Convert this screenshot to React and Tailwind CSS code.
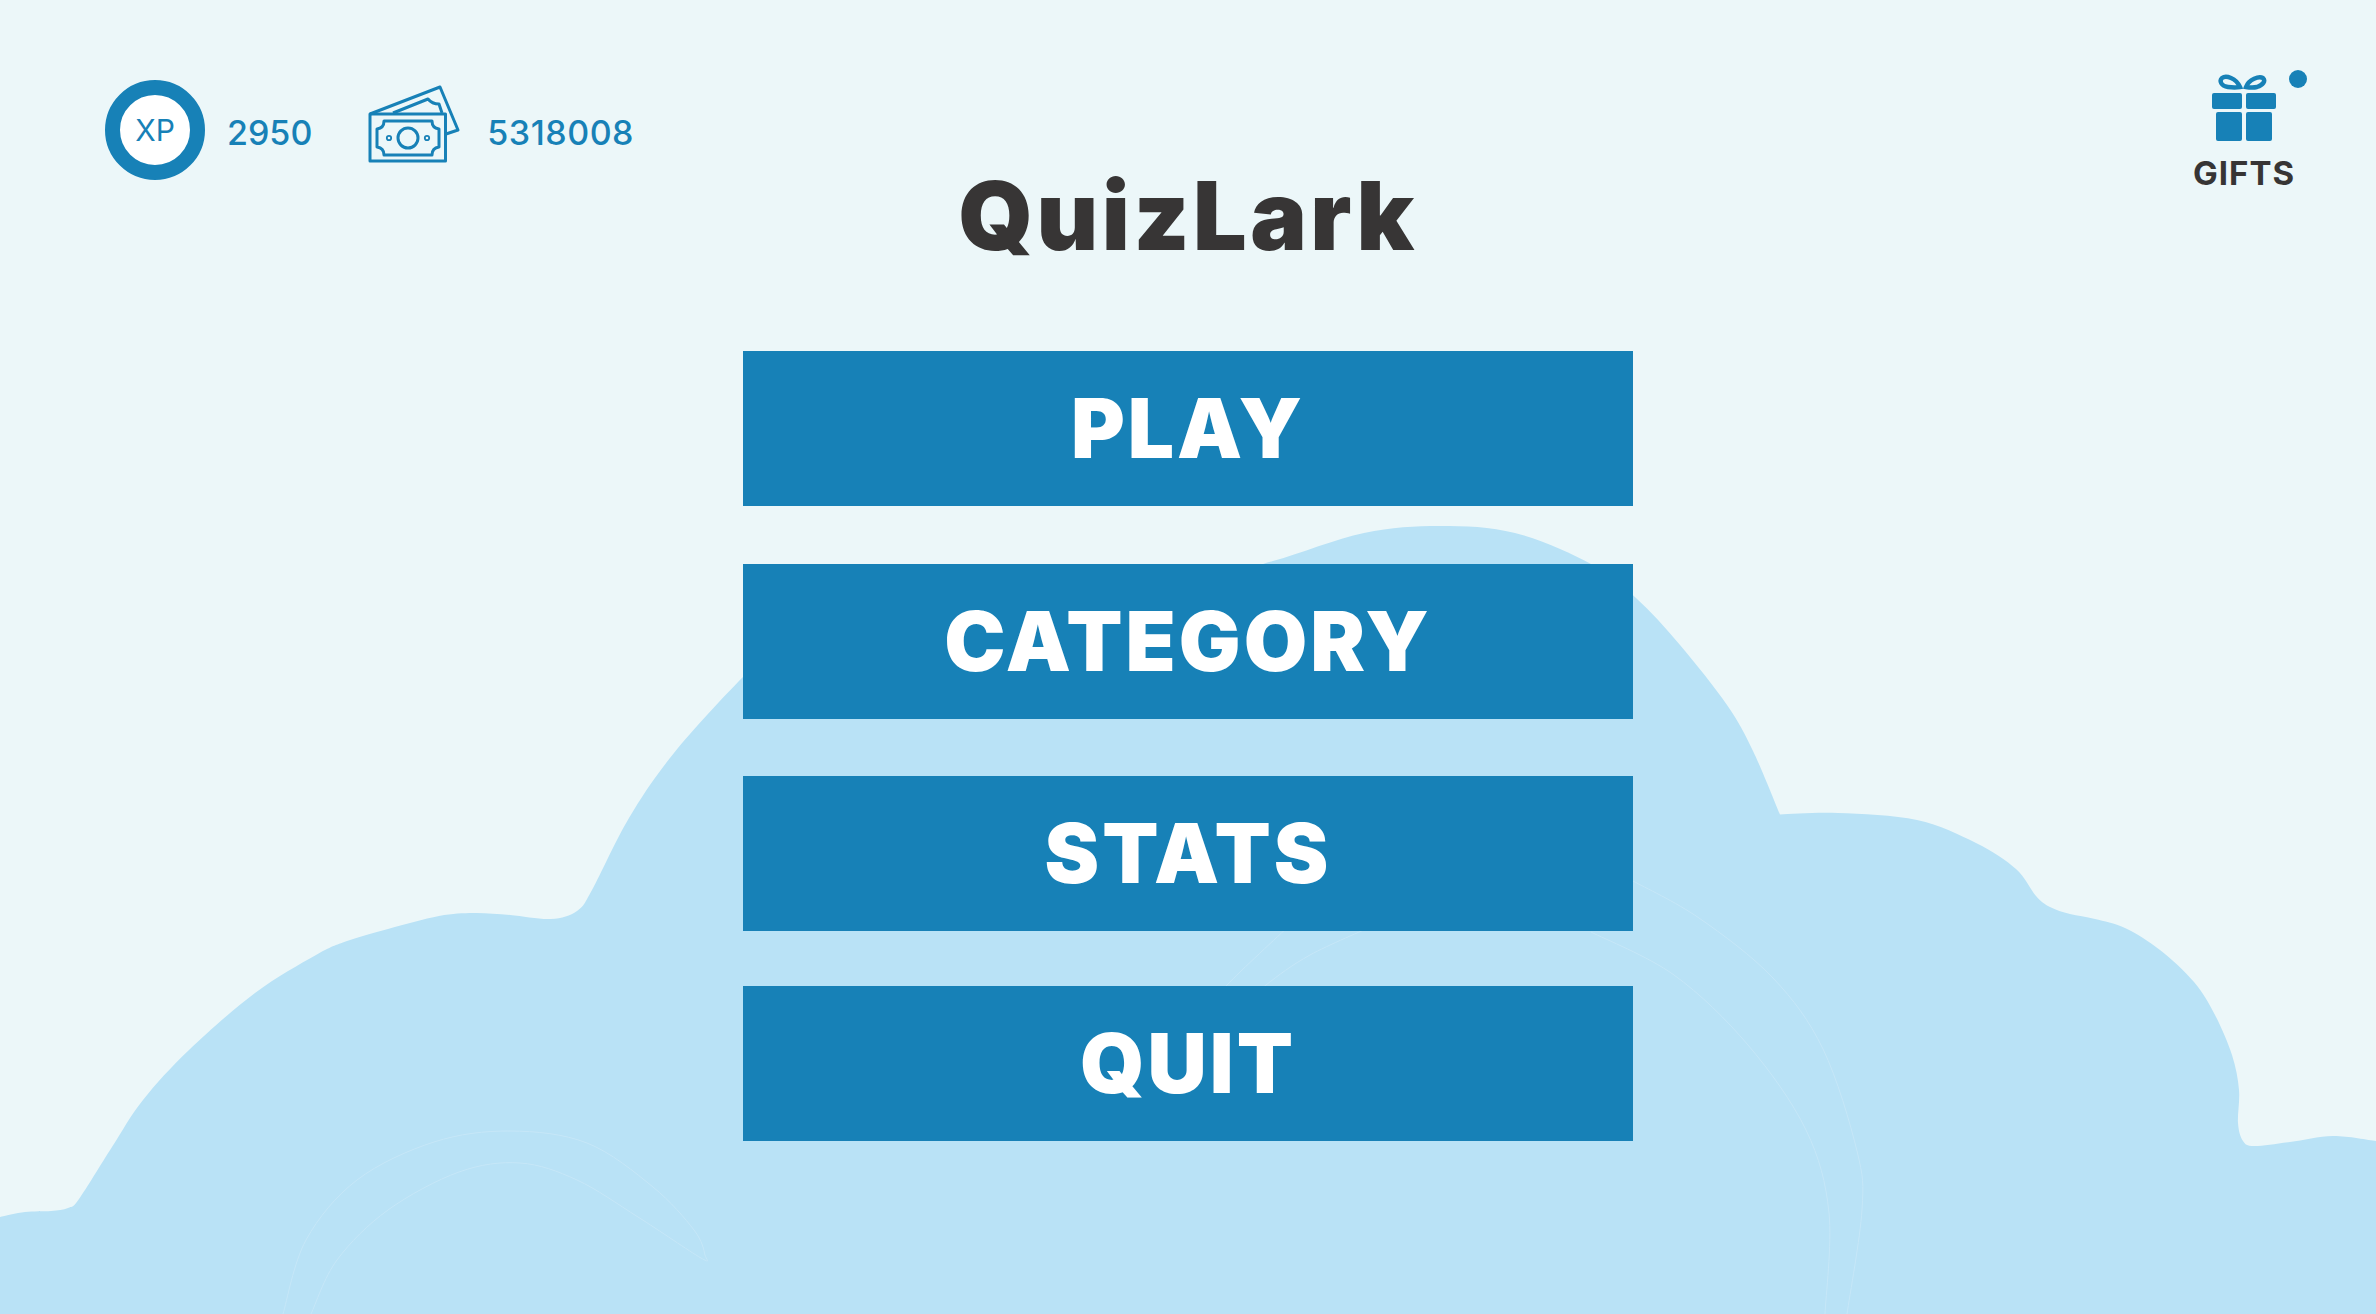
// smooth curve through a list of points
function curve(points) {
  let d = "";
  for (let i = 0; i < points.length - 1; i++) {
    const p0 = points[i - 1] || points[i];
    const p1 = points[i];
    const p2 = points[i + 1];
    const p3 = points[i + 2] || p2;
    const c1 = [p1[0] + (p2[0] - p0[0]) / 6, p1[1] + (p2[1] - p0[1]) / 6];
    const c2 = [p2[0] - (p3[0] - p1[0]) / 6, p2[1] - (p3[1] - p1[1]) / 6];
    d += ` C${c1[0]} ${c1[1]} ${c2[0]} ${c2[1]} ${p2[0]} ${p2[1]}`;
  }
  return d;
}

const blobLeft = [
  [0, 1217], [25, 1212], [51, 1211], [68, 1208], [79, 1199], [112, 1147], [143, 1100], [189, 1050],
  [255, 993], [316, 955], [347, 941], [388, 929], [439, 916], [474, 913], [510, 915], [551, 919], [577, 911], [592, 890],
  [629, 818], [674, 753], [743, 677], [800, 625], [870, 590], [1000, 578], [1200, 578], [1273, 561], [1364, 533], [1440, 526],
  [1515, 533], [1591, 564], [1636, 598], [1680, 645], [1727, 705], [1753, 751], [1780, 814.5],
];

const blobRight = [
  [1780, 814.5], [1838, 813], [1917, 820], [1976, 843], [2016, 869], [2036, 896], [2050, 907], [2070, 914],
  [2095, 919], [2125, 928], [2160, 950], [2194, 982], [2215, 1015], [2232, 1055], [2239, 1090], [2238, 1123],
  [2243, 1141], [2254, 1146], [2290, 1142], [2333, 1136], [2376, 1141],
];

const outlines = [
  [[283, 1314], [306, 1240], [357, 1180], [434, 1142], [510, 1131], [587, 1143], [653, 1187], [694, 1230], [705, 1255], [701, 1258], [638, 1217], [577, 1180], [520, 1163], [459, 1172], [388, 1210], [337, 1260], [311, 1314]],
  [[1633, 881], [1699, 918], [1773, 978], [1823, 1049], [1857, 1151], [1862, 1210], [1847, 1314]],
  [[1591, 932], [1674, 975], [1748, 1045], [1806, 1130], [1829, 1213], [1825, 1314]],
  [[1290, 925], [1227, 985], [1210, 1010]],
  [[1375, 925], [1310, 955], [1266, 985], [1240, 1010]],
];

function Background() {
  return (
    <svg width="2376" height="1314" viewBox="0 0 2376 1314" className="absolute inset-0">
      <path fill="#b9e2f6" d={`M0 1217${curve(blobLeft)}${curve(blobRight)} V1314 H0 Z`} />
      {outlines.map((line, i) => (
        <path key={i} fill="none" stroke="#c6e7f8" strokeWidth="1" d={`M${line[0][0]} ${line[0][1]}${curve(line)}`} />
      ))}
    </svg>
  );
}

function MoneyIcon() {
  return (
    <svg width="96" height="82" viewBox="0 0 96 82" className="block" fill="none" stroke="#1781b7" strokeWidth="3" strokeLinejoin="round">
      <rect x="4" y="31" width="75.5" height="47" />
      <path d="M4 31 L74 4 L92 47 L80 51" />
      <path d="M27 30 L62 16 Q66 21 73 21 L76 30" />
      <path d="M18 38 H66 Q66 45 73 46 V64 Q66 65 66 72 H18 Q18 65 11 64 V46 Q18 45 18 38 Z" />
      <circle cx="42" cy="55" r="10" />
      <circle cx="23" cy="55" r="2.2" strokeWidth="1.8" />
      <circle cx="61" cy="55" r="2.2" strokeWidth="1.8" />
    </svg>
  );
}

function GiftIcon() {
  return (
    <svg width="68" height="70" viewBox="0 0 68 70" className="block">
      <g fill="#1781b7">
        <rect x="2" y="21" width="30" height="16" rx="2" />
        <rect x="36" y="21" width="30" height="16" rx="2" />
        <rect x="6" y="40" width="26" height="29" rx="2" />
        <rect x="36" y="40" width="26" height="29" rx="2" />
      </g>
      <g fill="none" stroke="#1781b7" strokeWidth="4.4">
        <path d="M30 15 C26 6 16 3 12 6 C9 9 11 14 18 15 C22 15.5 27 15.5 30 15 Z" />
        <path d="M36 15 C39 7 49 4 53 6 C56 9 53 13 47 15 C43 16 39 15.5 36 15 Z" />
      </g>
    </svg>
  );
}

const menu = [
  { label: "PLAY", margin: "mt-[0px]" },
  { label: "CATEGORY", margin: "mt-[58px]" },
  { label: "STATS", margin: "mt-[57px]" },
  { label: "QUIT", margin: "mt-[55px]" },
];

export default function App() {
  return (
    <div className="relative h-[1314px] w-full overflow-hidden bg-[#ecf7f9] font-['Inter',sans-serif]">
      <Background />

      <div className="relative flex flex-col items-center">
        {/* Top bar */}
        <div className="flex h-[158px] w-full items-start justify-between pl-[105px] pr-[82px] pt-[72px]">
          <div className="mt-[8px] flex items-center">
            <div className="flex h-[100px] w-[100px] items-center justify-center rounded-full border-[15px] border-[#1781b7] bg-white">
              <span className="text-[30px] font-normal text-[#1781b7]">XP</span>
            </div>
            <span className="ml-[22px] mt-[6px] text-[34px] font-medium leading-none text-[#1781b7]">2950</span>
            <div className="mb-[12px] ml-[54px]">
              <MoneyIcon />
            </div>
            <span className="ml-[25px] mt-[6px] text-[34px] font-medium leading-none tracking-[0.5px] text-[#1781b7]">5318008</span>
          </div>

          <div className="relative flex w-[100px] flex-col items-center">
            <GiftIcon />
            <span className="mt-[11px] text-[33px] font-bold leading-[40px] tracking-[1px] text-[#373535]">GIFTS</span>
            <span className="absolute right-[-13px] top-[-2px] h-[18px] w-[18px] rounded-full bg-[#1781b7]" />
          </div>
        </div>

        <h1 className="flex h-[193px] items-start text-[95px] font-black leading-[115px] tracking-[3.5px] text-[#373535]">QuizLark</h1>

        {menu.map((item) => (
          <button
            key={item.label}
            className={`flex h-[155px] w-[890px] items-center justify-center bg-[#1781b7] text-[82px] font-black tracking-[3px] text-white ${item.margin}`}
          >
            {item.label}
          </button>
        ))}
      </div>
    </div>
  );
}
